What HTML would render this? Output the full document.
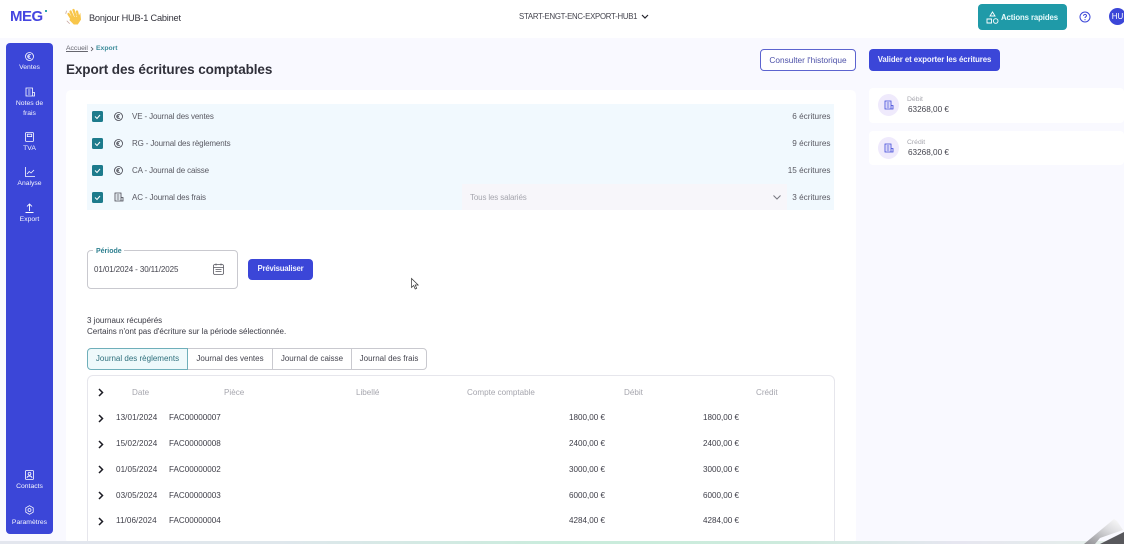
<!DOCTYPE html>
<html lang="fr"><head><meta charset="utf-8"><title>Export des écritures comptables</title>
<style>
*{box-sizing:border-box}
html,body{margin:0;padding:0;width:1124px;height:544px;overflow:hidden;background:#fff}
body{position:relative;font-family:"Liberation Sans",sans-serif;color:#3e3e48;font-size:8.1px}
.a{position:absolute}
.t{position:absolute;white-space:nowrap;line-height:12px;margin-top:1px}
.n{margin-top:0}
.c{transform:translateX(-50%);color:#fff;font-size:6.8px;opacity:.95}
.cb{position:absolute;left:92px;width:10.5px;height:10.5px;background:#1d7b8c;border-radius:1.5px}
.g{color:#a6a6ae}
.j{color:#595962;font-size:8px;letter-spacing:-.14px}
.r{color:#595962;font-size:8.2px;right:293.5px}
svg{position:absolute;overflow:visible;fill:none}
.tab{position:absolute;top:348px;height:22px;border:1px solid #c9c9cf;background:#fff;text-align:center;line-height:19px;font-size:8px;color:#44444e;white-space:nowrap}
.chev{left:98px;width:6px;height:9px}
.d{letter-spacing:.08px}
</style></head><body>

<div class="a" style="left:0;top:38px;width:1124px;height:506px;background:#f9f9ff"></div>
<div class="a" style="left:66px;top:90px;width:790px;height:454px;background:#fff;border-radius:5px"></div>
<div class="a" style="left:6px;top:43px;width:47px;height:491px;background:#3b46d8;border-radius:4px"></div>

<!-- header -->
<div class="t n" style="left:10px;top:7px;font-size:15px;line-height:20px;font-weight:bold;color:#4646e0;letter-spacing:-.5px">MEG</div>
<div class="a" style="left:45px;top:10px;width:2px;height:2px;background:#2aa3ad"></div>
<svg style="left:65px;top:8px" width="19" height="18" viewBox="0 0 19 18" stroke="#f8c64a" stroke-linecap="round"><path d="M6 10 3.500 6M8 9 5.500 3.500M10.500 8 8.500 2M13 8 12 3.500" stroke-width="2.300"/><path d="M7 9.500h6.500l1.500-3 .5 5-3 4.500H9L5 12z" fill="#f8c64a" stroke-width="1"/><path d="M1.500 3 .8 5.500M2 13l2.500 2.500" stroke="#c8a8a0" stroke-width=".8"/></svg>
<div class="t" style="left:89px;top:11px;font-size:9.2px;letter-spacing:-.2px;color:#33333c">Bonjour HUB-1 Cabinet</div>
<div class="t n" style="left:519px;top:11px;font-size:7.8px;letter-spacing:-.25px;color:#44444e">START-ENGT-ENC-EXPORT-HUB1</div>
<svg style="left:641px;top:14px" width="8" height="5" viewBox="0 0 8 5"><path d="M1 1l3 3 3-3" stroke="#22222a" stroke-width="1.2"/></svg>
<div class="a" style="left:978px;top:4px;width:89px;height:26px;background:#1f9aa8;border-radius:4px"></div>
<svg style="left:986px;top:11px" width="13" height="13" viewBox="0 0 13 13" stroke="#fff" stroke-width=".9"><path d="M6.500 1 9 5H4zM1 8h4.500v4H1z"/><circle cx="9.700" cy="10" r="2.300"/></svg>
<div class="t" style="left:1001px;top:11px;font-size:7.8px;letter-spacing:-.1px;font-weight:bold;color:#e8fbfc">Actions rapides</div>
<svg style="left:1079px;top:11px" width="12" height="12" viewBox="0 0 12 12"><circle cx="6" cy="6" r="5" stroke="#3b46d8" stroke-width="1"/><path d="M4.500 4.800C4.600 3 7.500 3 7.500 4.700 7.500 5.800 6 5.800 6 7" stroke="#3b46d8"/><circle cx="6" cy="8.700" r=".6" fill="#3b46d8"/></svg>
<div class="a" style="left:1109px;top:8px;width:17px;height:17px;border-radius:50%;background:#3b46d8;color:#fff;font-size:8px;line-height:17px;text-align:center">HU</div>

<!-- sidebar -->
<svg style="left:25px;top:52px" width="9" height="9" viewBox="0 0 9 9" stroke="#fff" stroke-width=".8"><circle cx="4.500" cy="4.500" r="4"/><path d="M6 3a2 2 0 1 0 0 3M2.500 4h2.500M2.500 5h2.500"/></svg>
<div class="t c" style="left:29.500px;top:61px">Ventes</div>
<svg style="left:25px;top:87px" width="10" height="10" viewBox="0 0 10 10" stroke="#fff" stroke-width=".8"><path d="M1 1h6.500v8H1zM7.500 5.500H9.500V9h-2M3 3h2.500M3 5h2.500M3 7h2.500"/></svg>
<div class="t c" style="left:29.500px;top:97px">Notes de</div>
<div class="t c" style="left:29.500px;top:107px">frais</div>
<svg style="left:25px;top:132px" width="9" height="10" viewBox="0 0 9 10" stroke="#fff" stroke-width=".8"><rect x=".5" y=".5" width="8" height="9" rx="1"/><rect x="2.300" y="2.200" width="4.400" height="2.400"/></svg>
<div class="t c" style="left:29.500px;top:142px">TVA</div>
<svg style="left:25px;top:167px" width="10" height="10" viewBox="0 0 10 10" stroke="#fff" stroke-width=".8"><path d="M.5 0v9.500H10M2 7l2.200-2.500L6 6l3-3"/></svg>
<div class="t c" style="left:29.500px;top:177px">Analyse</div>
<svg style="left:25px;top:203px" width="9" height="10" viewBox="0 0 9 10" stroke="#fff" stroke-width=".9"><path d="M4.500 8V1M2 3.400 4.500 1 7 3.400M.5 9.500h8"/></svg>
<div class="t c" style="left:29.500px;top:213px">Export</div>
<svg style="left:25px;top:470px" width="9" height="10" viewBox="0 0 9 10" stroke="#fff" stroke-width=".8"><rect x=".5" y=".5" width="8" height="9" rx="1"/><circle cx="4.500" cy="3.800" r="1.400"/><path d="M2 8c.3-2.600 4.700-2.600 5 0"/></svg>
<div class="t c" style="left:29.500px;top:480px">Contacts</div>
<svg style="left:25px;top:505px" width="9" height="10" viewBox="0 0 9 10" stroke="#fff" stroke-width=".8"><path d="M4.500 .7 8.200 2.800v4.400L4.500 9.300.8 7.200V2.800z"/><circle cx="4.500" cy="5" r="1.500"/></svg>
<div class="t c" style="left:29.500px;top:516px">Paramètres</div>

<!-- title -->
<div class="t n" style="left:66px;top:43px;font-size:6.800px;color:#66666f;text-decoration:underline">Accueil</div>
<svg style="left:90px;top:46px" width="4" height="6" viewBox="0 0 4 6"><path d="M1 1l2 2-2 2" stroke="#55555e" stroke-width=".8"/></svg>
<div class="t n" style="left:96px;top:43px;font-size:6.800px;font-weight:bold;color:#3d8c9a">Export</div>
<div class="t" style="left:66px;top:61px;font-size:13.500px;line-height:16px;font-weight:bold;color:#30303a;letter-spacing:-.1px">Export des écritures comptables</div>

<div class="a" style="left:760px;top:49px;width:96px;height:22px;border:1px solid #5c64cf;border-radius:4px;background:#fff;color:#4c50a8;font-size:8.300px;text-align:center;line-height:20px;white-space:nowrap">Consulter l'historique</div>
<div class="a" style="left:869px;top:49px;width:131px;height:22px;border-radius:4px;background:#3b46d8;color:#f4f5ff;font-size:7.800px;letter-spacing:-.08px;font-weight:bold;text-align:center;line-height:21px;white-space:nowrap">Valider et exporter les écritures</div>

<!-- right cards -->
<div class="a" style="left:869px;top:88px;width:255px;height:35px;background:#fff;border-radius:4px"></div>
<div class="a" style="left:869px;top:131px;width:255px;height:34px;background:#fff;border-radius:4px"></div>
<div class="a" style="left:878px;top:94px;width:21px;height:22px;border-radius:50%;background:#efeafc"></div>
<div class="a" style="left:878px;top:137px;width:21px;height:22px;border-radius:50%;background:#efeafc"></div>
<svg style="left:884px;top:100px" width="10" height="10" viewBox="0 0 10 10" stroke="#3b46d8" stroke-width=".8"><path d="M1 1h6v8H1zM7 5.500h2V9H7M2.700 3h2.600M2.700 5h2.600M2.700 7h2.600"/></svg>
<svg style="left:884px;top:143px" width="10" height="10" viewBox="0 0 10 10" stroke="#3b46d8" stroke-width=".8"><path d="M1 1h6v8H1zM7 5.500h2V9H7M2.700 3h2.600M2.700 5h2.600M2.700 7h2.600"/></svg>
<div class="t g" style="left:907px;top:93px;font-size:6.800px">Débit</div>
<div class="t" style="left:908px;top:103px;font-size:8.200px;color:#44444e">63268,00 €</div>
<div class="t g" style="left:907px;top:136px;font-size:6.800px">Crédit</div>
<div class="t" style="left:908px;top:146px;font-size:8.200px;color:#44444e">63268,00 €</div>

<!-- journals -->
<div class="a" style="left:87px;top:104px;width:747px;height:106px;background:#f1f9fe"></div>
<div class="a" style="left:462px;top:184px;width:325px;height:26px;background:#f7f6fa"></div>
<div class="cb" style="top:111px"></div><div class="cb" style="top:138px"></div><div class="cb" style="top:165px"></div><div class="cb" style="top:192px"></div>
<svg style="left:92px;top:111px" width="11" height="90" viewBox="0 0 11 90" stroke="#fff" stroke-width="1"><path d="M3 5.500 5 7.500 8 4M3 32.500 5 34.500 8 31M3 59.500 5 61.500 8 58M3 86.500 5 88.500 8 85"/></svg>
<svg style="left:114px;top:112px" width="9" height="9" viewBox="0 0 9 9" stroke="#44444e" stroke-width=".8"><circle cx="4.500" cy="4.500" r="4"/><path d="M6 3a2 2 0 1 0 0 3M2.500 4H5M2.500 5H5"/></svg>
<svg style="left:114px;top:139px" width="9" height="9" viewBox="0 0 9 9" stroke="#44444e" stroke-width=".8"><circle cx="4.500" cy="4.500" r="4"/><path d="M6 3a2 2 0 1 0 0 3M2.500 4H5M2.500 5H5"/></svg>
<svg style="left:114px;top:166px" width="9" height="9" viewBox="0 0 9 9" stroke="#44444e" stroke-width=".8"><circle cx="4.500" cy="4.500" r="4"/><path d="M6 3a2 2 0 1 0 0 3M2.500 4H5M2.500 5H5"/></svg>
<svg style="left:114px;top:192px" width="10" height="10" viewBox="0 0 10 10" stroke="#44444e" stroke-width=".8"><path d="M1 1h6v8H1zM7 5.500h2V9H7M2.700 3h2.600M2.700 5h2.600M2.700 7h2.600"/></svg>
<div class="t j" style="left:132px;top:110px">VE - Journal des ventes</div>
<div class="t j" style="left:132px;top:137px">RG - Journal des règlements</div>
<div class="t j" style="left:132px;top:164px">CA - Journal de caisse</div>
<div class="t j" style="left:132px;top:191px">AC - Journal des frais</div>
<div class="t r" style="top:110px">6 écritures</div>
<div class="t r" style="top:137px">9 écritures</div>
<div class="t r" style="top:164px">15 écritures</div>
<div class="t r" style="top:191px">3 écritures</div>
<div class="t g" style="left:470px;top:191px;font-size:8px;letter-spacing:-.15px">Tous les salariés</div>
<svg style="left:773px;top:195px" width="8" height="5" viewBox="0 0 8 5"><path d="M.5 .5 4 4 7.500 .5" stroke="#77777f" stroke-width="1"/></svg>

<!-- period -->
<div class="a" style="left:87px;top:250px;width:151px;height:39px;border:1px solid #c9c9cf;border-radius:4px"></div>
<div class="a" style="left:93px;top:247px;width:31px;height:6px;background:#fff"></div>
<div class="t" style="left:96px;top:244.500px;font-size:7px;font-weight:bold;color:#2f8090">Période</div>
<div class="t" style="left:94px;top:263px;font-size:8px;letter-spacing:-.1px;color:#44444e">01/01/2024 - 30/11/2025</div>
<svg style="left:213px;top:263px" width="11" height="12" viewBox="0 0 11 12" stroke="#55555e" stroke-width=".8"><rect x=".5" y="1.500" width="10" height="10" rx="1.500"/><path d="M.5 4.500h10M3 .5v2M8 .5v2M2.500 6.500h6M2.500 8.500h6"/></svg>
<div class="a" style="left:248px;top:259px;width:65px;height:21px;border-radius:4px;background:#3b46d8;color:#eef0ff;font-size:7.800px;letter-spacing:-.2px;font-weight:bold;text-align:center;line-height:20px">Prévisualiser</div>
<svg style="left:411px;top:278px" width="8" height="12" viewBox="0 0 8 12"><path d="M.5 .5v9l2.200-2 1.500 3.500 1.500-.7L4.200 7h3z" fill="#fff" stroke="#333" stroke-width=".7"/></svg>

<div class="t" style="left:87px;top:314px;font-size:8px;color:#3a3a44">3 journaux récupérés</div>
<div class="t" style="left:87px;top:325px;font-size:8px;color:#3a3a44">Certains n'ont pas d'écriture sur la période sélectionnée.</div>

<div class="tab" style="left:87px;width:101px;background:#eef9fb;border-color:#6fafba;border-radius:4px 0 0 4px;color:#2e6f7c">Journal des règlements</div>
<div class="tab" style="left:188px;width:85px;border-left:0">Journal des ventes</div>
<div class="tab" style="left:272px;width:80px">Journal de caisse</div>
<div class="tab" style="left:351px;width:76px;border-radius:0 4px 4px 0">Journal des frais</div>

<!-- table -->
<div class="a" style="left:87px;top:375px;width:748px;height:180px;border:1px solid #e6e6ec;border-radius:6px"></div>
<div class="t g" style="left:132px;top:386px">Date</div>
<div class="t g" style="left:224px;top:386px">Pièce</div>
<div class="t g" style="left:356px;top:386px">Libellé</div>
<div class="t g" style="left:467px;top:386px">Compte comptable</div>
<div class="t g" style="left:624px;top:386px">Débit</div>
<div class="t g" style="left:756px;top:386px">Crédit</div>

<svg class="chev" style="top:388px" viewBox="0 0 6 9"><path d="M1 1l3.500 3.500L1 8" stroke="#1c1c24" stroke-width="1.500"/></svg>
<svg class="chev" style="top:414px" viewBox="0 0 6 9"><path d="M1 1l3.500 3.500L1 8" stroke="#1c1c24" stroke-width="1.500"/></svg>
<svg class="chev" style="top:439.500px" viewBox="0 0 6 9"><path d="M1 1l3.500 3.500L1 8" stroke="#1c1c24" stroke-width="1.500"/></svg>
<svg class="chev" style="top:465px" viewBox="0 0 6 9"><path d="M1 1l3.500 3.500L1 8" stroke="#1c1c24" stroke-width="1.500"/></svg>
<svg class="chev" style="top:491px" viewBox="0 0 6 9"><path d="M1 1l3.500 3.500L1 8" stroke="#1c1c24" stroke-width="1.500"/></svg>
<svg class="chev" style="top:517px" viewBox="0 0 6 9"><path d="M1 1l3.500 3.500L1 8" stroke="#1c1c24" stroke-width="1.500"/></svg>

<div class="t d" style="left:116px;top:411px">13/01/2024</div><div class="t" style="left:169px;top:411px">FAC00000007</div><div class="t" style="left:569px;top:411px">1800,00 €</div><div class="t" style="left:703px;top:411px">1800,00 €</div>
<div class="t d" style="left:116px;top:437px">15/02/2024</div><div class="t" style="left:169px;top:437px">FAC00000008</div><div class="t" style="left:569px;top:437px">2400,00 €</div><div class="t" style="left:703px;top:437px">2400,00 €</div>
<div class="t d" style="left:116px;top:463px">01/05/2024</div><div class="t" style="left:169px;top:463px">FAC00000002</div><div class="t" style="left:569px;top:463px">3000,00 €</div><div class="t" style="left:703px;top:463px">3000,00 €</div>
<div class="t d" style="left:116px;top:488.500px">03/05/2024</div><div class="t" style="left:169px;top:488.500px">FAC00000003</div><div class="t" style="left:569px;top:488.500px">6000,00 €</div><div class="t" style="left:703px;top:488.500px">6000,00 €</div>
<div class="t d" style="left:116px;top:514px">11/06/2024</div><div class="t" style="left:169px;top:514px">FAC00000004</div><div class="t" style="left:569px;top:514px">4284,00 €</div><div class="t" style="left:703px;top:514px">4284,00 €</div>

<!-- bottom strip -->
<div class="a" style="left:0;top:540.500px;width:1124px;height:3.500px;background:linear-gradient(90deg,#e3e6ee 0,#dfe7ec 25%,#c9ecdc 50%,#cdebdd 70%,#e6e6f0 85%,#e4efe9 100%)"></div>
<svg style="left:1083px;top:518px" width="41" height="26" viewBox="0 0 41 26"><defs><linearGradient id="p" x1="0" y1="1" x2="1" y2="0"><stop offset="0" stop-color="#8e8e92"/><stop offset=".6" stop-color="#dcdcdf"/><stop offset="1" stop-color="#fff"/></linearGradient></defs><path d="M41 14V26H17z" fill="#58585c"/><path d="M1 26 31 1l3 2 6 9-23 8-5 6z" fill="url(#p)"/></svg>
</body></html>
